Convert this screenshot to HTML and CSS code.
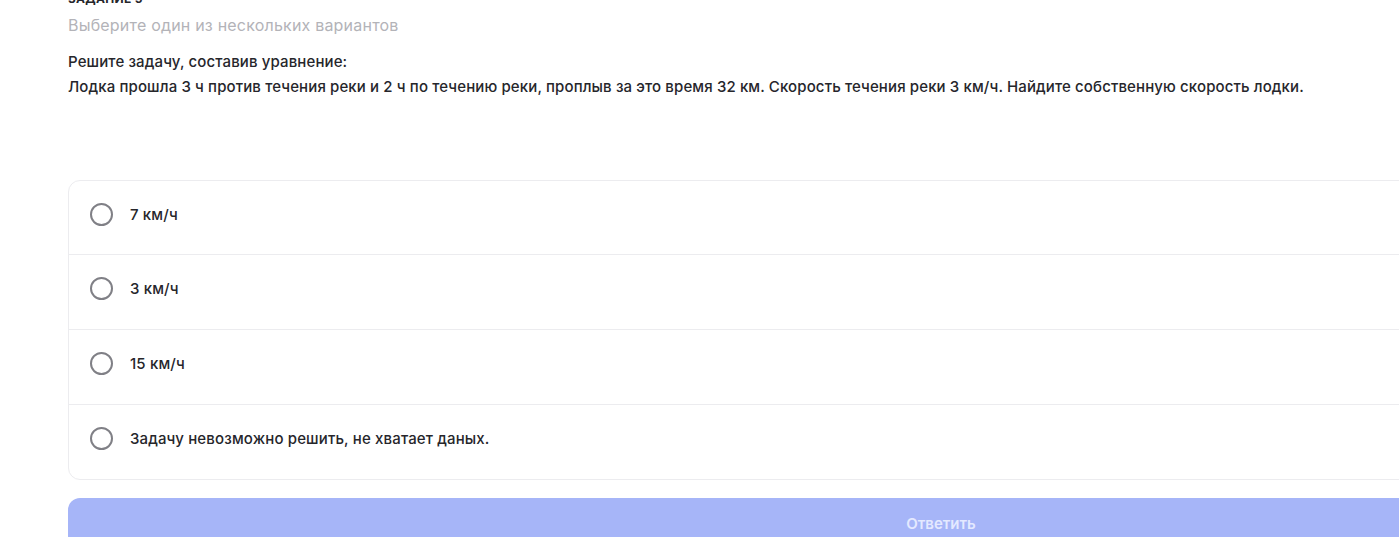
FILE: index.html
```html
<!DOCTYPE html>
<html lang="ru">
<head>
    <meta charset="UTF-8">
    <meta name="viewport" content="width=device-width, initial-scale=1.0">
    <title>Задание 5</title>
    <link rel="stylesheet" href="styles.css">
</head>
<body>
    <div class="task">
        <div class="task-label">Задание 5</div>
        <div class="task-hint">Выберите один из нескольких вариантов</div>
        <div class="task-text">
            <p>Решите задачу, составив уравнение:</p>
            <p>Лодка прошла 3 ч против течения реки и 2 ч по течению реки, проплыв за это время 32 км. Скорость течения реки 3 км/ч. Найдите собственную скорость лодки.</p>
        </div>

        <div class="options">
            <label class="option">
                <input type="radio" name="answer" value="1">
                <span class="radio"></span>
                <span>7 км/ч</span>
            </label>
            <label class="option">
                <input type="radio" name="answer" value="2">
                <span class="radio"></span>
                <span>3 км/ч</span>
            </label>
            <label class="option">
                <input type="radio" name="answer" value="3">
                <span class="radio"></span>
                <span>15 км/ч</span>
            </label>
            <label class="option">
                <input type="radio" name="answer" value="4">
                <span class="radio"></span>
                <span>Задачу невозможно решить, не хватает даных.</span>
            </label>
        </div>

        <button class="submit" disabled>Ответить</button>
    </div>
</body>
</html>
```

FILE: styles.css
```css
body {
    font-family: Inter, "Noto Sans", sans-serif;
    background-color: #ffffff;
    color: #26262b;
    margin: 0;
    overflow: hidden;
}

.task {
    width: 1746px;
    padding: 0 0 0 68px;
    margin-top: -9px;
}

.task-label {
    font-size: 12px;
    font-weight: 700;
    text-transform: uppercase;
    letter-spacing: 0.3px;
    line-height: 16px;
}

.task-hint {
    margin-top: 8px;
    font-size: 16px;
    line-height: 20px;
    letter-spacing: 0.2px;
    color: #b3b3b8;
}

.task-text {
    margin-top: 14px;
    font-size: 15px;
    font-weight: 500;
    line-height: 25px;
    letter-spacing: 0.12px;
}

.task-text p {
    margin: 0;
}

.options {
    margin-top: 81px;
    border: 1px solid #ececef;
    border-radius: 12px;
    overflow: hidden;
}

.option {
    display: flex;
    align-items: center;
    gap: 17px;
    height: 73px;
    padding: 0 21px 7px;
    box-sizing: border-box;
    font-size: 15px;
    font-weight: 500;
    letter-spacing: 0.14px;
    cursor: pointer;
}

.option + .option {
    height: 75px;
    border-top: 1px solid #ececef;
}

.option input {
    display: none;
}

.radio {
    width: 23px;
    height: 23px;
    box-sizing: border-box;
    border: 2px solid #808086;
    border-radius: 50%;
    flex-shrink: 0;
}

.option input:checked + .radio {
    border: 6px solid #6c7ff5;
}

.submit {
    display: block;
    width: 100%;
    height: 50px;
    margin-top: 18px;
    border: none;
    border-radius: 12px;
    background-color: #a6b5f8;
    color: #e4e9ff;
    font-family: inherit;
    font-size: 15px;
    font-weight: 600;
    cursor: pointer;
}
```
